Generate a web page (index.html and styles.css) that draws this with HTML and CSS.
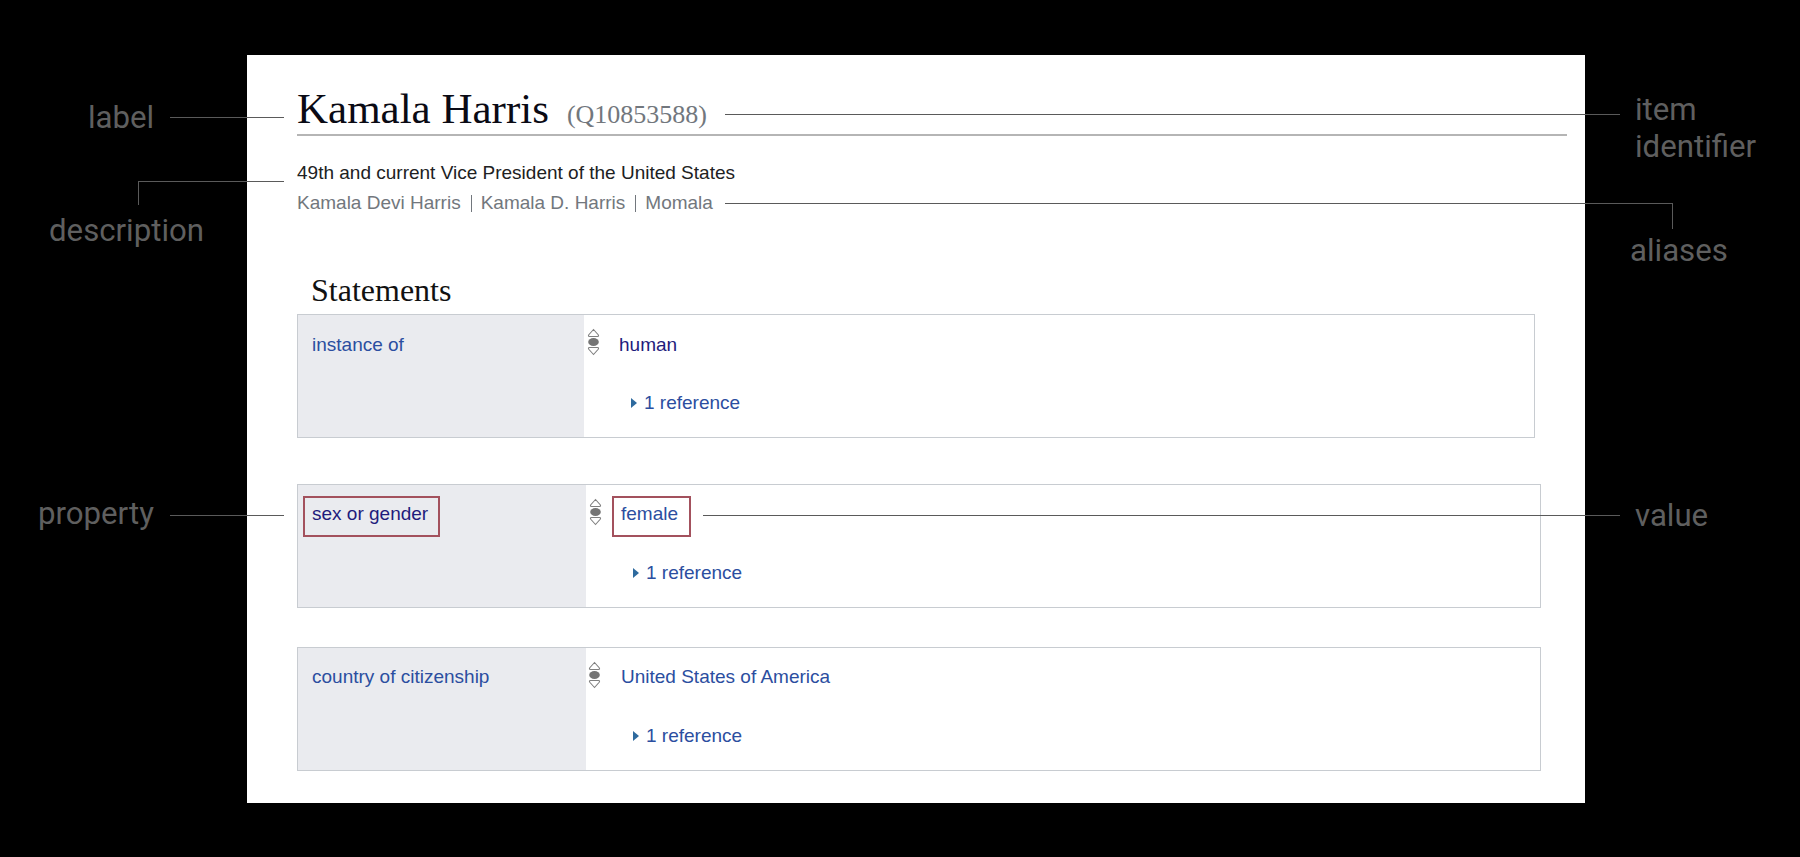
FILE: index.html
```html
<!DOCTYPE html>
<html lang="en">
<head>
<meta charset="utf-8">
<title>Kamala Harris (Q10853588)</title>
<link rel="stylesheet" href="styles.css">
</head>
<body>
<main class="panel">
  <header class="title-row">
    <h1 class="label">Kamala Harris</h1>
    <span class="qid">(Q10853588)</span>
  </header>
  <p class="description">49th and current Vice President of the United States</p>
  <ul class="aliases">
    <li>Kamala Devi Harris</li>
    <li>Kamala D. Harris</li>
    <li>Momala</li>
  </ul>
  <h2 class="statements">Statements</h2>

  <section class="statement statement-first">
    <div class="property"><a class="link">instance of</a></div>
    <div class="claim">
      <div class="value-row">
        <svg class="rank" viewBox="0 0 13 27" aria-hidden="true"><path d="M6.5 1 1.8 6.2Q.8 8 2.5 8H10.5Q12.2 8 11.2 6.2Z"/><ellipse cx="6.5" cy="13.5" rx="5.3" ry="4"/><path d="M6.5 26 1.8 20.8Q.8 19 2.5 19H10.5Q12.2 19 11.2 20.8Z"/></svg>
        <a class="value visited">human</a>
      </div>
      <div class="reference"><span class="arrow"></span><a class="link">1 reference</a></div>
    </div>
  </section>

  <section class="statement statement-second">
    <div class="property"><a class="link visited boxed">sex or gender</a></div>
    <div class="claim">
      <div class="value-row">
        <svg class="rank" viewBox="0 0 13 27" aria-hidden="true"><path d="M6.5 1 1.8 6.2Q.8 8 2.5 8H10.5Q12.2 8 11.2 6.2Z"/><ellipse cx="6.5" cy="13.5" rx="5.3" ry="4"/><path d="M6.5 26 1.8 20.8Q.8 19 2.5 19H10.5Q12.2 19 11.2 20.8Z"/></svg>
        <a class="value link boxed">female</a>
      </div>
      <div class="reference"><span class="arrow"></span><a class="link">1 reference</a></div>
    </div>
  </section>

  <section class="statement statement-third">
    <div class="property"><a class="link">country of citizenship</a></div>
    <div class="claim">
      <div class="value-row">
        <svg class="rank" viewBox="0 0 13 27" aria-hidden="true"><path d="M6.5 1 1.8 6.2Q.8 8 2.5 8H10.5Q12.2 8 11.2 6.2Z"/><ellipse cx="6.5" cy="13.5" rx="5.3" ry="4"/><path d="M6.5 26 1.8 20.8Q.8 19 2.5 19H10.5Q12.2 19 11.2 20.8Z"/></svg>
        <a class="value link">United States of America</a>
      </div>
      <div class="reference"><span class="arrow"></span><a class="link">1 reference</a></div>
    </div>
  </section>
</main>

<span class="note note-label">label</span>
<span class="note note-description">description</span>
<span class="note note-property">property</span>
<span class="note note-item">item<br>identifier</span>
<span class="note note-aliases">aliases</span>
<span class="note note-value">value</span>

<i class="leader leader-label"></i>
<i class="leader leader-description"></i>
<i class="leader leader-property"></i>
<i class="leader leader-item"></i>
<i class="leader leader-aliases"></i>
<i class="leader leader-value"></i>
</body>
</html>
```

FILE: styles.css
```css
* { box-sizing: border-box; }

html, body { margin: 0; height: 100%; }

body {
  position: relative;
  height: 857px;
  overflow: hidden;
  padding: 55px 215px 54px 247px;
  background: #000;
  font-family: "Liberation Sans", Arial, sans-serif;
  font-size: 19px;
  color: #202122;
}

.panel {
  height: 748px;
  padding: 0 18px 0 50px;
  background: #fff;
}

.title-row {
  display: flex;
  align-items: baseline;
  gap: 18px;
  height: 81px;
  padding-top: 29px;
  border-bottom: 2px solid #b5b5b5;
}

.label {
  margin: 0;
  font: 400 43px/50px "Liberation Serif", Georgia, serif;
  color: #0a0a14;
}

.qid {
  font: 400 26px/30px "Liberation Serif", Georgia, serif;
  color: #72777d;
}

.description {
  margin: 22px 0 0;
  line-height: 30px;
}

.aliases {
  display: flex;
  margin: 0;
  padding: 0;
  line-height: 30px;
  list-style: none;
  color: #72777d;
}

.aliases li + li {
  margin-left: 10px;
  padding-left: 10px;
  position: relative;
}

.aliases li + li::before {
  content: "";
  position: absolute;
  left: 0;
  top: 7px;
  height: 17px;
  border-left: 1px solid #72777d;
}

.statements {
  margin: 54px 0 0 14px;
  font: 400 32px/36px "Liberation Serif", Georgia, serif;
  color: #111;
}

.statement {
  display: grid;
  height: 124px;
  border: 1px solid #c8ccd1;
}

.statement-first {
  grid-template-columns: 286px 1fr;
  width: 1238px;
  margin-top: 6px;
}

.statement-second {
  grid-template-columns: 288px 1fr;
  width: 1244px;
  margin-top: 46px;
}

.statement-third {
  grid-template-columns: 288px 1fr;
  width: 1244px;
  margin-top: 39px;
}

.property {
  padding: 15px 0 0 14px;
  background: #eaebef;
}

.statement-third .property { padding-top: 14px; }

.link { color: #2b4ea0; }
.visited { color: #1f1b7c; }

.property .link,
.value {
  display: inline-block;
  line-height: 30px;
}

.claim {
  padding: 0 0 0 3px;
}

.value-row {
  display: flex;
  align-items: flex-start;
  height: 75px;
}

.rank {
  flex: none;
  width: 13px;
  height: 28px;
  margin-top: 13px;
  fill: none;
  stroke: #808080;
  stroke-width: 1.1;
}

.rank ellipse { fill: #757575; stroke: none; }

.statement-third .rank { margin-left: -1px; }

.value {
  margin: 15px 0 0 19px;
}

.statement-second .value { margin-left: 10px; }
.statement-third .value { margin: 14px 0 0 20px; }

.boxed {
  box-shadow: inset 0 0 0 2px #a3515d;
}

.property .boxed {
  margin: -4px 0 0 -9px;
  padding: 7px 12px 8px 9px;
  height: 41px;
  line-height: 22px;
}

.value.boxed {
  margin-top: 11px;
  padding: 7px 13px 8px 9px;
  height: 41px;
  line-height: 22px;
}

.reference {
  display: flex;
  align-items: center;
  gap: 7px;
  height: 30px;
  margin-top: -2px;
  padding-left: 44px;
}

.arrow {
  width: 0;
  height: 0;
  border-left: 6px solid #2e6a9e;
  border-top: 5px solid transparent;
  border-bottom: 5px solid transparent;
}

.note {
  position: absolute;
  font: 400 31.2px/37px Roboto, sans-serif;
  color: #5f5f5f;
}

.note-label { left: 88px; top: 99px; }
.note-description { left: 49px; top: 212px; }
.note-property { left: 38px; top: 495px; }
.note-item { left: 1635px; top: 91px; }
.note-aliases { left: 1630px; top: 232px; }
.note-value { left: 1635px; top: 497px; }

.leader {
  position: absolute;
  height: 1px;
  background: #5a5a5a;
}

.leader-label { left: 170px; top: 117px; width: 114px; }
.leader-property { left: 170px; top: 515px; width: 114px; }
.leader-item { left: 725px; top: 114px; width: 895px; }
.leader-value { left: 703px; top: 515px; width: 917px; }

.leader-description {
  left: 138px;
  top: 181px;
  width: 146px;
  height: 24px;
  background: none;
  border-top: 1px solid #5a5a5a;
  border-left: 1px solid #5a5a5a;
}

.leader-aliases {
  left: 725px;
  top: 203px;
  width: 948px;
  height: 26px;
  background: none;
  border-top: 1px solid #5a5a5a;
  border-right: 1px solid #5a5a5a;
}
```
